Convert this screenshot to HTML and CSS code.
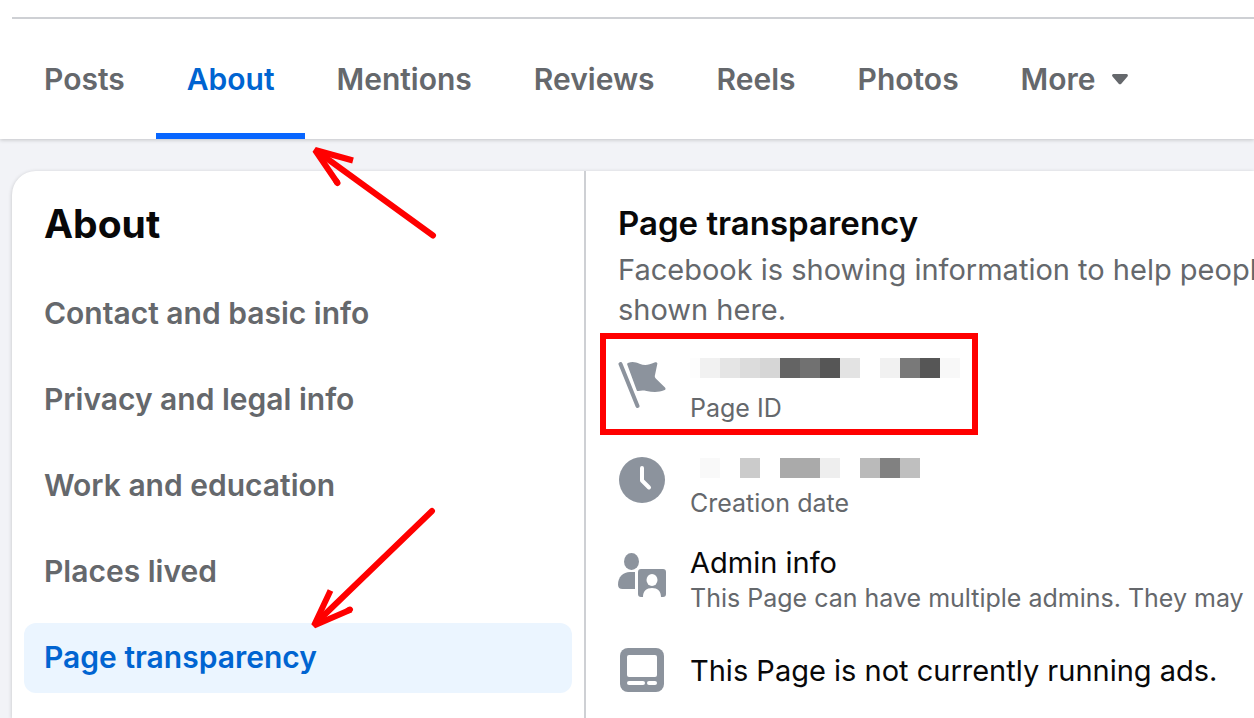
FILE: index.html
```html
<!DOCTYPE html>
<html lang="en">
<head>
  <meta charset="UTF-8" />
  <meta name="viewport" content="width=device-width, initial-scale=1.0" />
  <title>Page transparency</title>
  <link rel="stylesheet" href="styles.css">
</head>
<body>
  <header class="topbar">
    <nav class="tabs">
      <a href="#posts">Posts</a>
      <a href="#about" class="active">About</a>
      <a href="#mentions">Mentions</a>
      <a href="#reviews">Reviews</a>
      <a href="#reels">Reels</a>
      <a href="#photos">Photos</a>
      <button type="button">More
        <svg width="18" height="14" viewBox="0 0 18 14" aria-hidden="true"><path d="M2.500 2h13c1.300 0 1.900 1.500 1 2.500l-6.200 7.200c-.7.8-1.900.8-2.600 0L1.500 4.500C.6 3.500 1.200 2 2.500 2z" fill="#65686c"/></svg>
      </button>
    </nav>
  </header>

  <div class="card">
    <aside class="sidebar">
      <h1>About</h1>
      <nav class="menu">
        <a href="#contact">Contact and basic info</a>
        <a href="#privacy">Privacy and legal info</a>
        <a href="#work">Work and education</a>
        <a href="#places">Places lived</a>
        <a href="#transparency" class="active">Page transparency</a>
      </nav>
    </aside>

    <main class="content">
      <h2>Page transparency</h2>
      <p class="intro">Facebook is showing information to help people<br>shown here.</p>

      <div class="rows">
        <div class="row marked">
          <svg class="icon" viewBox="0 0 48 48" aria-hidden="true">
            <path d="M2.500 2L19.500 44" fill="none" stroke="#8c939d" stroke-width="4" stroke-linecap="round"/>
            <path d="M10.500.7c4-1.400 7.500-.5 11 1 5 2 9 1.500 15-1.200 1.800-.7 3.200.2 2.800 1.600L37 13c-.5 1.500-.2 2.500 1 3.700l9 8.800c1 1.200.6 2.200-1 2.800-5 2-11 2-17.500.6-3-.6-5.500-.6-8 .1-.8.200-1.500 0-1.800-.8L9.300 2.800c-.4-1 0-1.700 1.200-2.100z" fill="#8c939d"/>
          </svg>
          <div class="text">
            <svg class="redacted" width="272" height="38" aria-hidden="true">
              <g transform="translate(10 4)">
                <rect x="-10" width="10" height="20" fill="#fdfdfd"/>
                <rect width="20" height="20" fill="#f1f1f1"/>
                <rect x="20" width="20" height="20" fill="#e5e5e5"/>
                <rect x="40" width="20" height="20" fill="#dcdcdc"/>
                <rect x="60" width="20" height="20" fill="#d6d6d6"/>
                <rect x="80" width="20" height="20" fill="#646464"/>
                <rect x="100" width="20" height="20" fill="#717171"/>
                <rect x="120" width="20" height="20" fill="#565656"/>
                <rect x="140" width="20" height="20" fill="#e3e3e3"/>
                <rect x="180" width="20" height="20" fill="#f1f1f1"/>
                <rect x="200" width="20" height="20" fill="#797979"/>
                <rect x="220" width="20" height="20" fill="#565656"/>
                <rect x="240" width="20" height="20" fill="#f8f8f8"/>
              </g>
            </svg>
            <span class="sub">Page ID</span>
          </div>
        </div>

        <div class="row">
          <svg class="icon" viewBox="0 0 48 48" aria-hidden="true">
            <circle cx="24" cy="23" r="23" fill="#8c939d"/>
            <path d="M24 11v12.500l7 7" fill="none" stroke="#fff" stroke-width="4" stroke-linecap="round" stroke-linejoin="round"/>
          </svg>
          <div class="text">
            <svg class="redacted" width="272" height="38" aria-hidden="true">
              <g transform="translate(10 9)">
                <rect width="20" height="20" fill="#f9f9f9"/>
                <rect x="40" width="20" height="20" fill="#cbcbcb"/>
                <rect x="80" width="40" height="20" fill="#aaa"/>
                <rect x="120" width="20" height="20" fill="#eee"/>
                <rect x="160" width="20" height="20" fill="#bababa"/>
                <rect x="180" width="20" height="20" fill="#818181"/>
                <rect x="200" width="20" height="20" fill="#bfbfbf"/>
              </g>
            </svg>
            <span class="sub">Creation date</span>
          </div>
        </div>

        <div class="row">
          <svg class="icon" viewBox="0 0 48 48" aria-hidden="true">
            <g fill="#8c939d">
              <ellipse cx="13.500" cy="9.500" rx="7.500" ry="8.500"/>
              <path d="M12 20h5v17H4.500C1.500 37 0 35.500 0 32.500 0 25 5 20 12 20z"/>
              <path d="M23 17h22q3 0 3 3v22q0 3-3 3h-2c0-6-3.500-9-9-9s-9 3-9 9h-2q-3 0-3-3V20q0-3 3-3z"/>
            </g>
            <ellipse cx="34" cy="28" rx="5.500" ry="6" fill="#fff"/>
          </svg>
          <div class="text">
            <span class="label">Admin info</span>
            <span class="sub">This Page can have multiple admins. They may</span>
          </div>
        </div>

        <div class="row single">
          <svg class="icon" viewBox="0 0 48 48" aria-hidden="true">
            <rect x="2" y="1" width="44" height="44" rx="8" fill="#8c939d"/>
            <g fill="#fff">
              <rect x="9" y="8" width="30" height="22" rx="2"/>
              <rect x="9" y="34" width="18" height="4" rx="2"/>
              <rect x="29" y="34" width="10" height="4" rx="2"/>
            </g>
          </svg>
          <div class="text">
            <span class="label">This Page is not currently running ads.</span>
          </div>
        </div>
      </div>
    </main>
  </div>

  <!-- annotation arrows -->
  <svg class="arrow arrow-tab" width="130" height="100" viewBox="310 143 130 100" aria-hidden="true">
    <g fill="none" stroke="#f00" stroke-width="6" stroke-linejoin="bevel">
      <path d="M353 160.500L315 150l22.500 33"/>
      <path d="M433 235.500L318 152M337.500 183l-1-1.500" stroke-linecap="round"/>
    </g>
  </svg>
  <svg class="arrow arrow-menu" width="130" height="130" viewBox="310 504 130 130" aria-hidden="true">
    <g fill="none" stroke="#f00" stroke-width="6" stroke-linejoin="bevel">
      <path d="M330.500 590.500L314 625.500l37-16"/>
      <path d="M432 511L317 622M350 609.500l-1.500.7" stroke-linecap="round"/>
    </g>
  </svg>
</body>
</html>
```

FILE: styles.css
```css
*, *::before, *::after { box-sizing: border-box; }
body {
  margin: 0;
  position: relative;
  display: flex;
  flex-direction: column;
  min-height: 100vh;
  overflow: hidden;
  background: #f2f3f7;
  color: #080809;
  font-family: Inter, "Liberation Sans", sans-serif;
  font-size: 29px;
}
a { text-decoration: none; }
h1, h2, p { margin: 0; }

.topbar {
  padding: 17px 0 0 12px;
  background: #fff;
  box-shadow: 0 1px 4px rgba(0,0,0,0.2);
}
.tabs {
  display: flex;
  height: 122px;
  padding-left: 1px;
  border-top: 2px solid #ced0d4;
}
.tabs a, .tabs button {
  display: flex;
  align-items: center;
  gap: 15px;
  padding: 0 31px;
  border: 0;
  background: none;
  color: #65686c;
  font: inherit;
  font-size: 30px;
  font-weight: 600;
  cursor: pointer;
}
.tabs .active {
  color: #0064d1;
  border-top: 6px solid transparent;
  border-bottom: 6px solid #0866ff;
  border-radius: 2px 2px 0 0;
}

.card {
  flex: 1;
  display: flex;
  margin: 32px 0 0 12px;
  border-radius: 24px 0 0 0;
  background: #fff;
  box-shadow: 0 1px 4px rgba(0,0,0,0.2);
}
.sidebar {
  flex: 0 0 574px;
  padding: 29px 12px 24px;
  border-right: 2px solid #ced0d4;
}
.sidebar h1 {
  padding: 0 20px;
  font-size: 39px;
  line-height: 48px;
}
.menu {
  display: grid;
  gap: 16px;
  margin-top: 31px;
}
.menu a {
  padding: 0 20px 2px;
  border-radius: 12px;
  color: #65686c;
  font-size: 30px;
  font-weight: 600;
  line-height: 68px;
}
.menu .active {
  background: #ebf5ff;
  color: #0064d1;
}

.content {
  flex: 1;
  min-width: 0;
  padding: 32px 0 12px 32px;
  white-space: nowrap;
}
.content h2 {
  font-size: 33px;
  font-weight: 600;
  line-height: 40px;
}
.intro {
  margin-top: 7px;
  color: #65686c;
  line-height: 40px;
}
.rows {
  display: grid;
  gap: 25px;
  margin-top: 24px;
}
.row {
  position: relative;
  display: flex;
  gap: 24px;
}
.single { min-height: 64px; }
.single .text { align-self: center; }
.icon {
  flex: none;
  width: 48px;
  height: 48px;
  margin-top: 8px;
}
.label, .redacted, .sub { display: block; }
.label { line-height: 38px; }
.sub {
  color: #65686c;
  font-size: 25px;
  line-height: 32px;
}

/* red box around the page ID */
.marked::after {
  content: "";
  position: absolute;
  top: -21px;
  left: -18px;
  width: 378px;
  height: 102px;
  border: 6px solid #f00;
}
.arrow { position: absolute; }
.arrow-tab { top: 143px; left: 310px; }
.arrow-menu { top: 504px; left: 310px; }
```
